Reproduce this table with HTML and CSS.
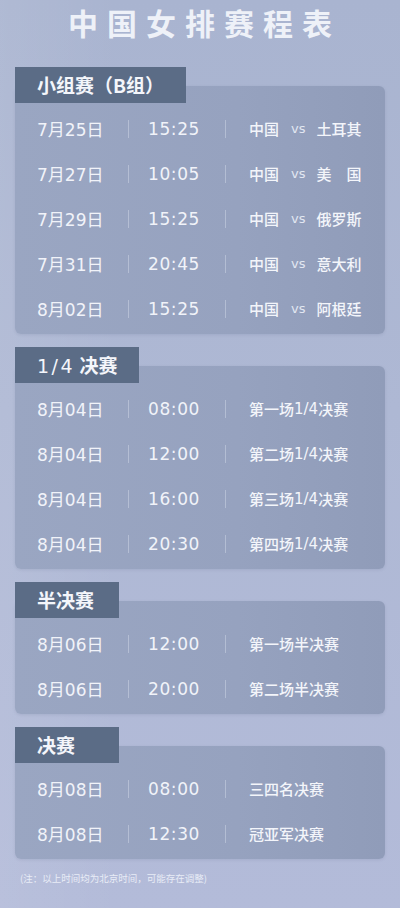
FILE: index.html
```html
<!DOCTYPE html>
<html lang="zh">
<head>
<meta charset="utf-8">
<title>中国女排赛程表</title>
<link rel="stylesheet" href="styles.css">
</head>
<body>
<div class="page">
  <h1 class="title">中国女排赛程表</h1>

  <section class="stage">
    <div class="tab">小组赛（B组）</div>
    <div class="card">
      <div class="row"><span class="date">7月25日</span><i class="sep"></i><span class="time">15:25</span><i class="sep"></i><span class="match"><span class="team">中国</span><span class="vs">vs</span><span class="team">土耳其</span></span></div>
      <div class="row"><span class="date">7月27日</span><i class="sep"></i><span class="time">10:05</span><i class="sep"></i><span class="match"><span class="team">中国</span><span class="vs">vs</span><span class="team">美　国</span></span></div>
      <div class="row"><span class="date">7月29日</span><i class="sep"></i><span class="time">15:25</span><i class="sep"></i><span class="match"><span class="team">中国</span><span class="vs">vs</span><span class="team">俄罗斯</span></span></div>
      <div class="row"><span class="date">7月31日</span><i class="sep"></i><span class="time">20:45</span><i class="sep"></i><span class="match"><span class="team">中国</span><span class="vs">vs</span><span class="team">意大利</span></span></div>
      <div class="row"><span class="date">8月02日</span><i class="sep"></i><span class="time">15:25</span><i class="sep"></i><span class="match"><span class="team">中国</span><span class="vs">vs</span><span class="team">阿根廷</span></span></div>
    </div>
  </section>

  <section class="stage">
    <div class="tab"><span class="num">1/4</span> 决赛</div>
    <div class="card">
      <div class="row"><span class="date">8月04日</span><i class="sep"></i><span class="time">08:00</span><i class="sep"></i><span class="match">第一场<span class="frac">1/4</span>决赛</span></div>
      <div class="row"><span class="date">8月04日</span><i class="sep"></i><span class="time">12:00</span><i class="sep"></i><span class="match">第二场<span class="frac">1/4</span>决赛</span></div>
      <div class="row"><span class="date">8月04日</span><i class="sep"></i><span class="time">16:00</span><i class="sep"></i><span class="match">第三场<span class="frac">1/4</span>决赛</span></div>
      <div class="row"><span class="date">8月04日</span><i class="sep"></i><span class="time">20:30</span><i class="sep"></i><span class="match">第四场<span class="frac">1/4</span>决赛</span></div>
    </div>
  </section>

  <section class="stage">
    <div class="tab">半决赛</div>
    <div class="card">
      <div class="row"><span class="date">8月06日</span><i class="sep"></i><span class="time">12:00</span><i class="sep"></i><span class="match">第一场半决赛</span></div>
      <div class="row"><span class="date">8月06日</span><i class="sep"></i><span class="time">20:00</span><i class="sep"></i><span class="match">第二场半决赛</span></div>
    </div>
  </section>

  <section class="stage">
    <div class="tab">决赛</div>
    <div class="card">
      <div class="row"><span class="date">8月08日</span><i class="sep"></i><span class="time">08:00</span><i class="sep"></i><span class="match">三四名决赛</span></div>
      <div class="row"><span class="date">8月08日</span><i class="sep"></i><span class="time">12:30</span><i class="sep"></i><span class="match">冠亚军决赛</span></div>
    </div>
  </section>

  <p class="note">(注：以上时间均为北京时间，可能存在调整)</p>
</div>
</body>
</html>
```

FILE: styles.css
```css
html, body {
  margin: 0;
  padding: 0;
}

body {
  width: 400px;
  min-height: 908px;
  background: linear-gradient(180deg, #a9b4d0 0%, #aeb8d4 45%, #b3bbd9 100%);
  font-family: "Noto Sans CJK SC", "Noto Sans", sans-serif;
  color: #f3f5fa;
}

.page {
  min-height: 908px;
  padding: 0 15px;
  box-sizing: border-box;
  background: linear-gradient(90deg, rgba(255,255,255,0.08) 0%, rgba(255,255,255,0) 30%, rgba(255,255,255,0) 100%);
}

.title {
  margin: 0 0 22px;
  height: 45px;
  line-height: 45px;
  font-size: 30px;
  font-weight: 700;
  letter-spacing: 9px;
  padding-left: 9px;
  text-align: center;
  color: #eef1f8;
}

.stage {
  display: flex;
  flex-direction: column;
  margin-bottom: 13px;
}

.tab {
  position: relative;
  z-index: 1;
  align-self: flex-start;
  min-width: 104px;
  box-sizing: border-box;
  height: 36px;
  line-height: 36px;
  padding: 0 22px;
  background: #5b6c86;
  font-size: 19px;
  font-weight: 700;
  color: #f4f6fb;
}

.num {
  font-family: "DejaVu Sans", sans-serif;
  font-weight: 400;
  letter-spacing: 2.5px;
}

.card {
  margin-top: -17px;
  padding: 20px 0 3px 22px;
  border-radius: 6px;
  background: linear-gradient(90deg, #9aa6c2 0%, #96a2bf 60%, #909cb9 100%);
  box-shadow: 0 1px 3px rgba(80, 95, 130, 0.15);
}

.row {
  display: flex;
  align-items: center;
  height: 45px;
}

.date, .time {
  font-family: "DejaVu Sans", "Noto Sans CJK SC", sans-serif;
  font-size: 17px;
  color: #f1f3f9;
}

.date {
  width: 91px;
}

.time {
  width: 96px;
  box-sizing: border-box;
  padding-left: 19px;
  letter-spacing: 0.6px;
}

.sep {
  display: block;
  width: 1px;
  height: 18px;
  background: rgba(235, 240, 250, 0.35);
}

.match {
  padding-left: 23px;
  display: flex;
  align-items: center;
  font-size: 15px;
  font-weight: 500;
  color: #f3f5fa;
  font-family: "Noto Sans CJK SC", sans-serif;
}

.frac {
  font-family: "DejaVu Sans", sans-serif;
  font-weight: 400;
  font-size: 15px;
}

.team {
  font-size: 15px;
}

.vs {
  font-family: "DejaVu Sans", sans-serif;
  font-size: 13px;
  color: #e2e7f2;
  margin: 0 11px 0 12px;
}

.note {
  margin: 10px 0 0 5px;
  font-size: 9.5px;
  line-height: 12px;
  color: #e8ecf6;
}
```
